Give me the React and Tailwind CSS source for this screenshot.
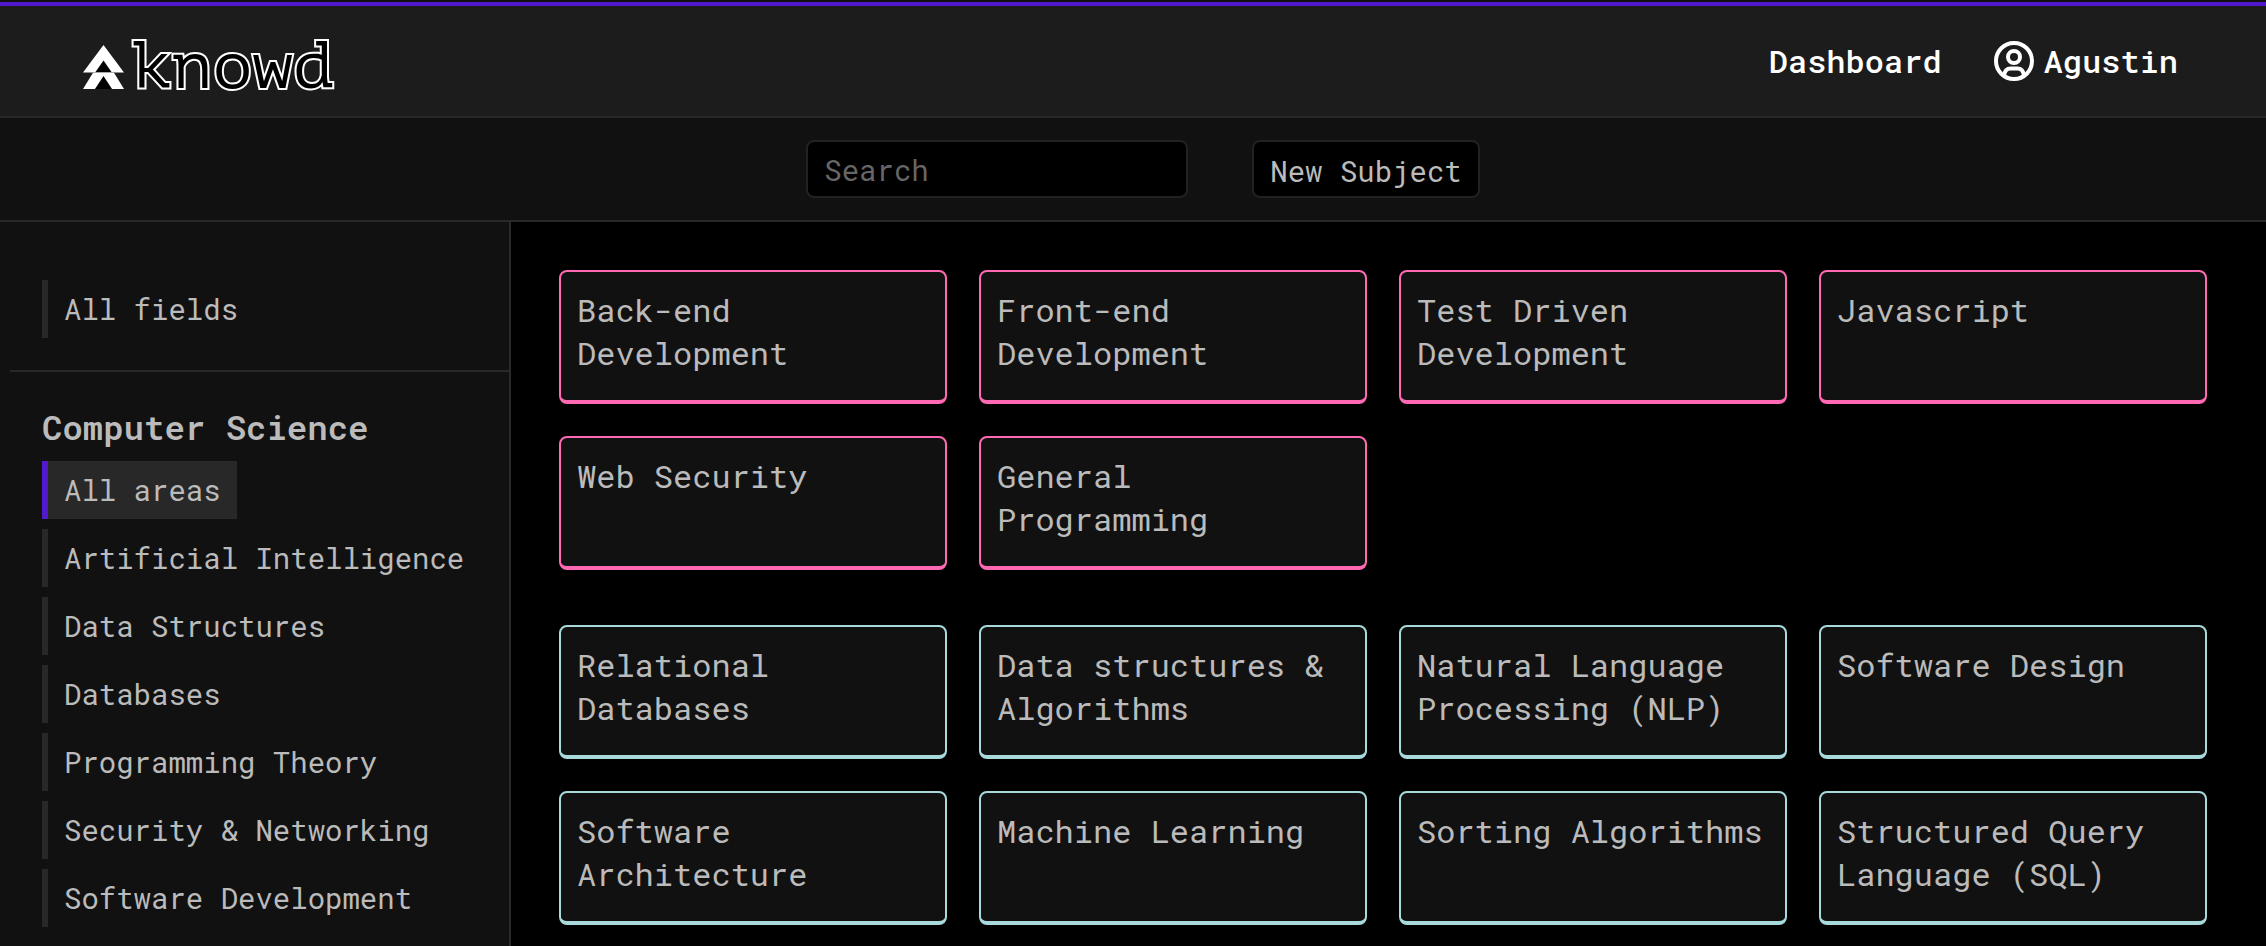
const areas = [
  "All areas",
  "Artificial Intelligence",
  "Data Structures",
  "Databases",
  "Programming Theory",
  "Security & Networking",
  "Software Development",
];

const groups = [
  {
    border: "border-[#ff69b4]",
    subjects: [
      "Back-end Development",
      "Front-end Development",
      "Test Driven Development",
      "Javascript",
      "Web Security",
      "General Programming",
    ],
  },
  {
    border: "border-[#a8dadc]",
    subjects: [
      "Relational Databases",
      "Data structures & Algorithms",
      "Natural Language Processing (NLP)",
      "Software Design",
      "Software Architecture",
      "Machine Learning",
      "Sorting Algorithms",
      "Structured Query Language (SQL)",
    ],
  },
];

function LogoMark() {
  return (
    <svg viewBox="0 0 41 44" className="h-11 w-[41px]" aria-hidden="true">
      <path d="M10 27.8 H31 L41 44 H0 Z" fill="#fff" />
      <path d="M20.5 31 L29 44 H12 Z" fill="#000" />
      <path d="M20.5 0 L41 27.5 H0 Z" fill="#fff" />
      <path d="M20.5 15.5 L28.5 27 H12.5 Z" fill="#000" />
    </svg>
  );
}

function UserIcon() {
  return (
    <svg viewBox="0 0 40 40" className="size-10" fill="none" stroke="#fff" strokeWidth="4" aria-hidden="true">
      <circle cx="20" cy="20" r="18" />
      <circle cx="20" cy="16" r="6" />
      <path d="M10 34.5 C10.6 30 13 27.5 16.5 27.5 H23.5 C27 27.5 29.4 30 30 34.5" />
    </svg>
  );
}

function AreaLink({ label, active }) {
  return (
    <a
      href="#"
      className={
        "block w-fit whitespace-nowrap border-l-6 px-4 py-2.5 text-[29px] leading-[38px] " +
        (active ? "border-[#5119cc] bg-[#282828]" : "border-[#282828]")
      }
    >
      {label}
    </a>
  );
}

export default function App() {
  return (
    <div className="flex min-h-screen flex-col bg-black font-['Roboto_Mono','Liberation_Mono',monospace] text-[#bbb]">
      <header className="border-t-2 border-[#111]">
        <div className="flex h-[116px] items-center justify-between border-t-4 border-b-2 border-t-[#5119cc] border-b-[#282828] bg-[#1c1c1c] pr-[88px] pl-[83px]">
          <a href="#" className="flex items-center gap-2 pt-3">
            <LogoMark />
            <span className="font-['PT_Mono','DejaVu_Sans_Mono',monospace] text-[67px] leading-[76px] text-black [-webkit-text-stroke:4px_white] [paint-order:stroke_fill]">
              knowd
            </span>
          </a>
          <nav className="flex items-center gap-[52px] text-[32px] leading-10 font-medium text-white">
            <a href="#">Dashboard</a>
            <a href="#" className="flex items-center gap-2.5">
              <UserIcon />
              Agustin
            </a>
          </nav>
        </div>
      </header>

      <div className="flex items-center justify-center gap-16 border-b-2 border-[#282828] bg-[#111] py-[22px] pl-5 text-[29px] leading-[38px]">
        <input
          type="search"
          aria-label="Search"
          placeholder="Search"
          className="h-[58px] w-[382px] rounded-lg border-2 border-[#222] bg-black px-4 pt-0.5 placeholder:text-[#666]"
        />
        <button type="button" className="h-[58px] rounded-lg border-2 border-[#222] bg-black px-4 pt-1">
          New Subject
        </button>
      </div>

      <div className="flex grow">
        <aside className="w-[511px] shrink-0 border-r-2 border-[#2a2a2a] bg-[#111] pl-2.5">
          <div className="border-b-2 border-[#282828] px-8 pt-[58px] pb-8">
            <AreaLink label="All fields" />
          </div>
          <div className="px-8 pt-8">
            <h2 className="pb-3 text-[34px] leading-[45px] font-semibold">Computer Science</h2>
            <nav className="flex flex-col gap-2.5">
              {areas.map((area) => (
                <AreaLink key={area} label={area} active={area === "All areas"} />
              ))}
            </nav>
          </div>
        </aside>

        <main className="flex grow flex-col gap-[55px] pt-12 pr-[59px] pl-12">
          {groups.map((group) => (
            <section key={group.border} className="grid grid-cols-4 gap-8">
              {group.subjects.map((subject) => (
                <a
                  key={subject}
                  href="#"
                  className={
                    "h-[134px] rounded-lg border-2 border-b-4 bg-[#111] px-4 pt-4 text-[32px] leading-[43px] " +
                    group.border
                  }
                >
                  {subject}
                </a>
              ))}
            </section>
          ))}
        </main>
      </div>
    </div>
  );
}
